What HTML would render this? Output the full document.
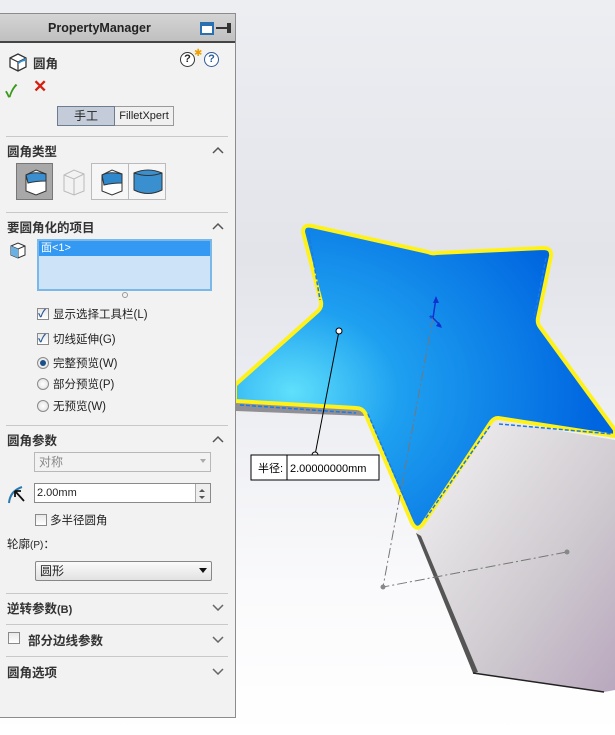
<!DOCTYPE html>
<html><head><meta charset="utf-8"><style>
*{margin:0;padding:0;box-sizing:border-box}
body{width:615px;height:735px;overflow:hidden;background:#fff;font-family:"Liberation Sans","Noto Sans CJK SC",sans-serif;font-size:12px;color:#222;position:relative}
#bg{position:absolute;left:0;top:0;width:615px;height:735px}
#panel{position:absolute;left:0;top:13px;width:236px;height:705px;background:#f2f2f2;border:1px solid #8c8c8c;border-left:none}
.a{position:absolute;white-space:nowrap}
.h{font-weight:bold;font-size:12.5px;color:#333}
.sep{position:absolute;left:6px;width:222px;height:1px;background:#c8c8c8}
.chev{position:absolute;left:212px;width:12px;height:8px}
.cb{position:absolute;width:12px;height:12px;border:1px solid #8a8a8a;background:linear-gradient(#e8e8e8,#fff)}
.rd{position:absolute;width:12px;height:12px;border:1px solid #8a8a8a;border-radius:50%;background:radial-gradient(#fff,#ddd)}
.t{font-size:11.5px}
</style></head><body>
<svg id="bg" width="615" height="735" viewBox="0 0 615 735">
<defs>
<linearGradient id="g0" x1="0" y1="0" x2="0" y2="1"><stop offset="0" stop-color="#eceef2"/><stop offset="0.35" stop-color="#e2e4ea"/><stop offset="0.8" stop-color="#fafafc"/><stop offset="1" stop-color="#fff"/></linearGradient>
<radialGradient id="gs" cx="0.15" cy="0.55" r="0.8"><stop offset="0" stop-color="#5fe0fb"/><stop offset="0.35" stop-color="#1ea0f0"/><stop offset="1" stop-color="#0066e0"/></radialGradient>
<linearGradient id="gh" x1="0" y1="0" x2="1" y2="1"><stop offset="0" stop-color="#f6f4f6"/><stop offset="0.6" stop-color="#cfcbd0"/><stop offset="1" stop-color="#b9a8be"/></linearGradient>
</defs>
<rect width="615" height="735" fill="url(#g0)"/>
<path d="M235 400 L362 408 L366 416 L236 411 Z" fill="#8f8f94"/>
<path d="M416 533 L495 420 L615 440 L615 690 L604 692 L473 673 Z" fill="url(#gh)"/>
<path d="M416 533 L473 673 L478 672 L421 536 Z" fill="#555"/>
<path d="M473 673 L604 692" stroke="#222" stroke-width="1.5"/>
<path d="M303 232 Q303 224 312 226 L428 252 Q432 254 436 253 L543 248 Q552 248 551 256 L538 318 Q537 323 540 327 L615 430 L615 436 L498 418 Q494 418 491 422 L423 524 Q417 532 412 523 L365 413 Q362 408 356 408 L235 401 L235 385 L318 311 Q322 307 321 302 Z" fill="url(#gs)" stroke="#fff21a" stroke-width="4" stroke-linejoin="round"/>
<path d="M309 234 L320 300 M546 258 L534 318 M368 414 L413 518 M499 424 L612 434 M240 405 L356 413 M426 518 L490 426" stroke="#1a78e8" stroke-width="1.5" stroke-dasharray="4 2"/>
<path d="M433 318 L383 587 L567 552" stroke="#777" stroke-width="1" fill="none" stroke-dasharray="10 3 2 3"/>
<circle cx="383" cy="587" r="2.5" fill="#888"/><circle cx="567" cy="552" r="2.5" fill="#888"/>
<path d="M433 318 L436 298 M433 318 L441 326" stroke="#1030d0" stroke-width="1.5"/>
<path d="M436 296 l-3 7 h6z M442 328 l-6 -2 l3 -4z" fill="#1030d0"/>
<text x="429" y="322" fill="#1030d0" font-size="10">*</text>
<line x1="339" y1="331" x2="315" y2="455" stroke="#000"/>
<circle cx="339" cy="331" r="3" fill="#fff" stroke="#000"/>
<circle cx="315" cy="455" r="3" fill="#fff" stroke="#000"/>
<rect x="251" y="455" width="128" height="25" fill="#fff" stroke="#000"/>
<line x1="287" y1="455" x2="287" y2="480" stroke="#000"/>
<text x="258" y="472" font-size="11" font-family="Liberation Sans,Noto Sans CJK SC,sans-serif">半径:</text>
<text x="290" y="472" font-size="11" font-family="Liberation Sans,sans-serif">2.00000000mm</text>
</svg>
<div id="panel">
<div class="a" style="left:0;top:0;width:235px;height:29px;background:linear-gradient(#d4d4d4,#c0c0c0);border-bottom:2px solid #444"></div>
<div class="a" style="left:48px;top:7px;font-weight:bold;font-size:12.5px">PropertyManager</div>
<div class="a" style="left:200px;top:8px;width:14px;height:13px;border:2px solid #2a6fb0;border-top-width:4px;background:#fff"></div>
<div class="a" style="left:216px;top:13px;width:12px;height:2px;background:#333"></div>
<div class="a" style="left:227px;top:9px;width:4px;height:10px;background:#333"></div>
<svg class="a" style="left:7px;top:37px" width="22" height="22"><path d="M3 7 L11 3 L19 7 L19 16 L11 20 L3 16Z" fill="#fff" stroke="#333" stroke-width="1.3"/><path d="M3 7 L11 11 L19 7 M11 11 V20" stroke="#333" fill="none" stroke-width="1.2"/><path d="M11 11 L19 7 L19 10 Q14 10 11 14Z" fill="#3a8ccc"/></svg>
<div class="a h" style="left:33px;top:39px">圆角</div>
<div class="a" style="left:180px;top:38px;width:15px;height:15px;border:1.5px solid #333;border-radius:50%;background:#fff;font-size:11px;font-weight:bold;text-align:center;line-height:12px">?</div>
<div class="a" style="left:194px;top:34px;color:#f0a000;font-size:10px">✱</div>
<div class="a" style="left:204px;top:38px;width:15px;height:15px;border:1.5px solid #2c5a9a;border-radius:50%;background:#fff;font-size:11px;font-weight:bold;color:#2c5a9a;text-align:center;line-height:12px">?</div>
<div class="a" style="left:5px;top:63px;color:#3a9a1a;font-size:17px;font-weight:bold">✓</div>
<div class="a" style="left:33px;top:63px;color:#d42010;font-size:17px;font-weight:bold">✕</div>
<div class="a" style="left:57px;top:92px;width:58px;height:20px;background:#c3ccd8;border:1px solid #6d7d90;text-align:center;line-height:18px">手工</div>
<div class="a" style="left:115px;top:92px;width:59px;height:20px;background:#f0f0f0;border:1px solid #9a9a9a;border-left:none;text-align:center;line-height:18px;font-size:11px">FilletXpert</div>
<div class="sep" style="top:122px"></div>
<div class="a h" style="left:7px;top:127px">圆角类型</div>
<svg class="chev" style="top:132px"><path d="M1 7 L6 2 L11 7" stroke="#555" stroke-width="1.5" fill="none"/></svg>
<div class="a" style="left:16px;top:149px;width:37px;height:37px;background:#a8a8a8;border:1px solid #777"></div>
<div class="a" style="left:91px;top:149px;width:75px;height:37px;border:1px solid #bbb;background:#f6f6f6"></div>
<div class="a" style="left:128px;top:149px;width:1px;height:37px;background:#bbb"></div>
<svg class="a" style="left:16px;top:149px" width="150" height="37">
<path d="M10 12 L20 7 L30 11 L30 28 L20 32 L10 28Z" fill="#fff" stroke="#333"/><path d="M10 12 Q18 8 30 11 L30 18 Q20 18 12 20Z" fill="#3a8fd0" stroke="#333"/>
<path d="M48 12 L58 7 L68 11 L68 28 L58 32 L48 28Z" fill="#f2f2f2" stroke="#bbb"/><path d="M48 12 L58 16 L68 11 M58 16 V32" stroke="#bbb" fill="none"/>
<path d="M86 12 L96 7 L106 11 L106 28 L96 32 L86 28Z" fill="#fff" stroke="#333"/><path d="M86 12 Q94 8 106 11 L106 20 Q96 20 88 22Z" fill="#2f88cc" stroke="#333"/>
<path d="M118 10 Q132 4 146 10 L146 27 Q132 34 118 27Z" fill="#3a90cf" stroke="#333"/><path d="M118 10 Q132 15 146 10" fill="none" stroke="#333"/>
</svg>
<div class="sep" style="top:198px"></div>
<div class="a h" style="left:7px;top:203px">要圆角化的项目</div>
<svg class="chev" style="top:208px"><path d="M1 7 L6 2 L11 7" stroke="#555" stroke-width="1.5" fill="none"/></svg>
<svg class="a" style="left:9px;top:227px" width="18" height="18"><path d="M2 5 L9 2 L16 5 L16 14 L9 17 L2 14Z" fill="#fff" stroke="#333"/><path d="M2 5 L9 8 L16 5 M9 8 V17" stroke="#333" fill="none"/><path d="M2 5 L9 8 V17 L2 14Z" fill="#6ab0e0"/></svg>
<div class="a" style="left:37px;top:225px;width:175px;height:52px;background:#cde4f8;border:2px solid #7ab8ea"></div>
<div class="a" style="left:39px;top:227px;width:171px;height:15px;background:#3399f3;color:#fff;font-size:11px;line-height:14px;padding-left:2px">面&lt;1&gt;</div>
<div class="a" style="left:122px;top:278px;width:6px;height:6px;border:1px solid #999;border-radius:50%"></div>
<div class="cb" style="left:37px;top:294px"></div><div class="a" style="left:38px;top:291px;color:#2a5a9a;font-size:11px;font-weight:bold">✓</div>
<div class="a t" style="left:53px;top:292px">显示选择工具栏(L)</div>
<div class="cb" style="left:37px;top:319px"></div><div class="a" style="left:38px;top:316px;color:#2a5a9a;font-size:11px;font-weight:bold">✓</div>
<div class="a t" style="left:53px;top:317px">切线延伸(G)</div>
<div class="rd" style="left:37px;top:343px"></div><div class="a" style="left:40px;top:346px;width:6px;height:6px;border-radius:50%;background:#1a4f8a"></div>
<div class="a t" style="left:53px;top:341px">完整预览(W)</div>
<div class="rd" style="left:37px;top:364px"></div>
<div class="a t" style="left:53px;top:362px">部分预览(P)</div>
<div class="rd" style="left:37px;top:386px"></div>
<div class="a t" style="left:53px;top:384px">无预览(W)</div>
<div class="sep" style="top:411px"></div>
<div class="a h" style="left:7px;top:416px">圆角参数</div>
<svg class="chev" style="top:421px"><path d="M1 7 L6 2 L11 7" stroke="#555" stroke-width="1.5" fill="none"/></svg>
<div class="a" style="left:34px;top:438px;width:177px;height:20px;border:1px solid #b8b8b8;background:#f2f2f2;color:#888;padding-left:4px;line-height:18px">对称</div>
<div class="a" style="left:200px;top:445px;border:3px solid transparent;border-top:4px solid #aaa"></div>
<svg class="a" style="left:6px;top:469px" width="24" height="22"><path d="M3 20 Q4 8 16 4" stroke="#2a7ab0" stroke-width="2" fill="none"/><path d="M9 8 L18 18 M9 8 V14 M9 8 H15" stroke="#111" stroke-width="1.8" fill="none"/></svg>
<div class="a" style="left:34px;top:469px;width:177px;height:20px;border:1px solid #8a8a8a;background:#fff;padding-left:2px;line-height:18px;font-size:11px">2.00mm</div>
<div class="a" style="left:195px;top:470px;width:15px;height:18px;border-left:1px solid #aaa;background:#eee"></div>
<div class="a" style="left:199px;top:472px;border:3px solid transparent;border-bottom:3px solid #555"></div>
<div class="a" style="left:199px;top:482px;border:3px solid transparent;border-top:3px solid #555"></div>
<div class="cb" style="left:35px;top:500px"></div>
<div class="a t" style="left:50px;top:498px">多半径圆角</div>
<div class="a t" style="left:7px;top:522px">轮廓<span style="font-size:10px">(P)</span>：</div>
<div class="a" style="left:35px;top:547px;width:177px;height:20px;border:1px solid #888;border-radius:2px;background:linear-gradient(#fbfbfb,#e2e2e2);padding-left:4px;line-height:18px">圆形</div>
<div class="a" style="left:199px;top:554px;border:4px solid transparent;border-top:5px solid #111"></div>
<div class="sep" style="top:579px"></div>
<div class="a h" style="left:7px;top:584px">逆转参数<span style="font-size:11px">(B)</span></div>
<svg class="chev" style="top:589px"><path d="M1 2 L6 7 L11 2" stroke="#666" stroke-width="1.5" fill="none"/></svg>
<div class="sep" style="top:610px"></div>
<div class="cb" style="left:8px;top:618px"></div>
<div class="a h" style="left:28px;top:616px">部分边线参数</div>
<svg class="chev" style="top:621px"><path d="M1 2 L6 7 L11 2" stroke="#666" stroke-width="1.5" fill="none"/></svg>
<div class="sep" style="top:642px"></div>
<div class="a h" style="left:7px;top:648px">圆角选项</div>
<svg class="chev" style="top:653px"><path d="M1 2 L6 7 L11 2" stroke="#666" stroke-width="1.5" fill="none"/></svg>
</div>
</body></html>
